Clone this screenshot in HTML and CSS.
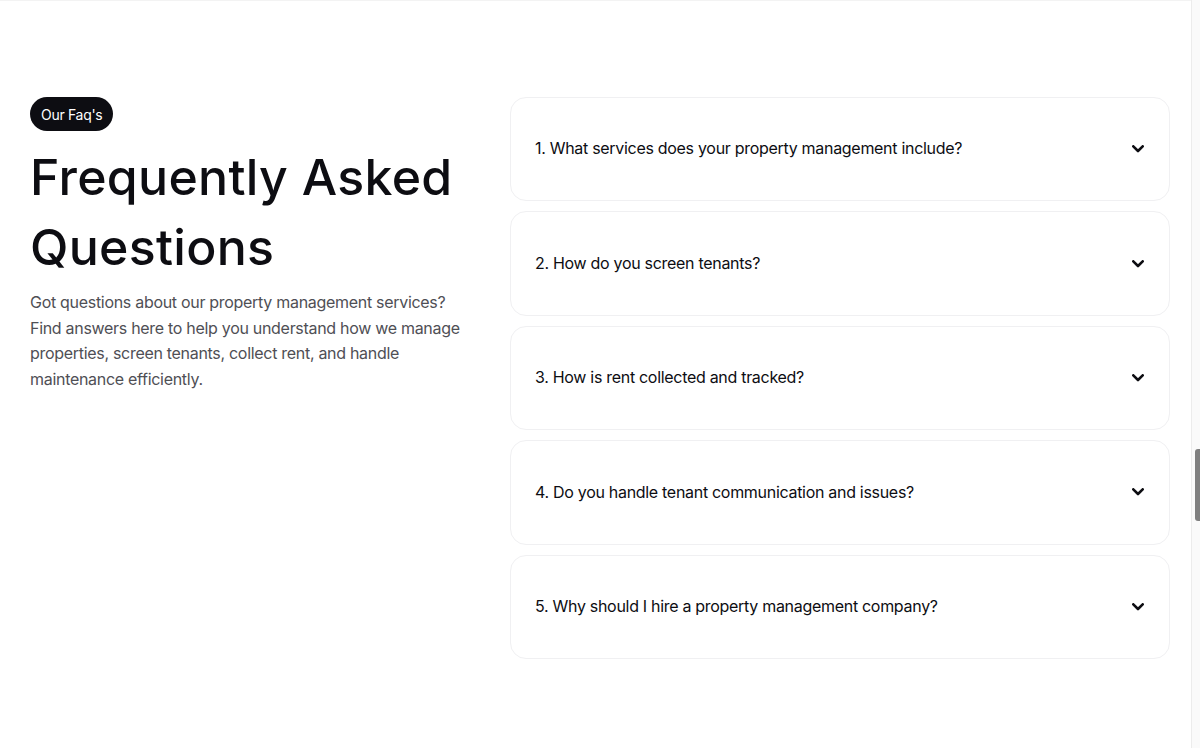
FILE: index.html
```html
<!DOCTYPE html>
<html lang="en">
<head>
<meta charset="utf-8">
<title>FAQ</title>
<link rel="stylesheet" href="styles.css">
</head>
<body>
<section class="faq">
  <div class="faq-inner">
    <div class="faq-intro">
      <span class="pill">Our Faq's</span>
      <h2 class="title">Frequently Asked Questions</h2>
      <p class="lead">Got questions about our property management services? Find answers here to help you understand how we manage properties, screen tenants, collect rent, and handle maintenance efficiently.</p>
    </div>
    <div class="faq-list">
      <div class="faq-item"><span class="q">1. What services does your property management include?</span><svg class="chev" viewBox="0 0 12 8" width="12" height="8"><polyline points="1.3,1.3 6,6 10.7,1.3"/></svg></div>
      <div class="faq-item"><span class="q">2. How do you screen tenants?</span><svg class="chev" viewBox="0 0 12 8" width="12" height="8"><polyline points="1.3,1.3 6,6 10.7,1.3"/></svg></div>
      <div class="faq-item"><span class="q">3. How is rent collected and tracked?</span><svg class="chev" viewBox="0 0 12 8" width="12" height="8"><polyline points="1.3,1.3 6,6 10.7,1.3"/></svg></div>
      <div class="faq-item"><span class="q">4. Do you handle tenant communication and issues?</span><svg class="chev" viewBox="0 0 12 8" width="12" height="8"><polyline points="1.3,1.3 6,6 10.7,1.3"/></svg></div>
      <div class="faq-item"><span class="q">5. Why should I hire a property management company?</span><svg class="chev" viewBox="0 0 12 8" width="12" height="8"><polyline points="1.3,1.3 6,6 10.7,1.3"/></svg></div>
    </div>
  </div>
</section>
<div class="scrollbar"><div class="thumb"></div></div>
</body>
</html>
```
FILE: styles.css
```css
html, body {
  margin: 0;
  padding: 0;
  background: #fff;
  height: 100%;
  overflow: hidden;
}
body {
  font-family: Inter, "Liberation Sans", sans-serif;
  color: #0d0d12;
}
.faq {
  border-top: 1px solid #f3f3f3;
  padding: 96px 0 90px;
}
.faq-inner {
  width: 1140px;
  margin: 0 auto;
  display: grid;
  grid-template-columns: 450px 660px;
  column-gap: 30px;
  align-items: start;
}
.faq-intro {
  display: flex;
  flex-direction: column;
  align-items: flex-start;
}
.pill {
  display: inline-flex;
  align-items: center;
  height: 34px;
  padding: 0 11px;
  border-radius: 17px;
  background: #0d0d12;
  color: #fff;
  font-size: 14px;
  letter-spacing: -0.3px;
}
.title {
  margin: 10.8px 0 0;
  font-size: 50px;
  line-height: 70px;
  font-weight: 500;
  letter-spacing: 0.3px;
  color: #0d0d12;
}
.lead {
  margin: 8.5px 0 0;
  font-size: 16px;
  line-height: 25.6px;
  color: #4f4f55;
  letter-spacing: -0.3px;
}
.faq-list {
  display: flex;
  flex-direction: column;
  gap: 10px;
}
.faq-item {
  display: flex;
  align-items: center;
  justify-content: space-between;
  padding: 38.4px 25px 38.4px 24px;
  border: 1px solid #f0f0f2;
  border-radius: 16px;
  background: #fff;
}
.q {
  font-size: 16px;
  line-height: 25.6px;
  color: #0d0d12;
  letter-spacing: -0.3px;
}
.chev {
  flex: none;
}
.chev polyline {
  fill: none;
  stroke: #0d0d12;
  stroke-width: 2.6;
  stroke-linecap: round;
  stroke-linejoin: round;
}
.scrollbar {
  position: fixed;
  top: 0;
  right: 0;
  width: 8px;
  height: 100%;
  background: #fafafa;
  border-left: 1px solid #ececec;
}
.thumb {
  position: absolute;
  top: 449px;
  left: 3px;
  width: 5px;
  height: 72px;
  border-radius: 3px 0 0 3px;
  background: #7f7f7f;
}
```
